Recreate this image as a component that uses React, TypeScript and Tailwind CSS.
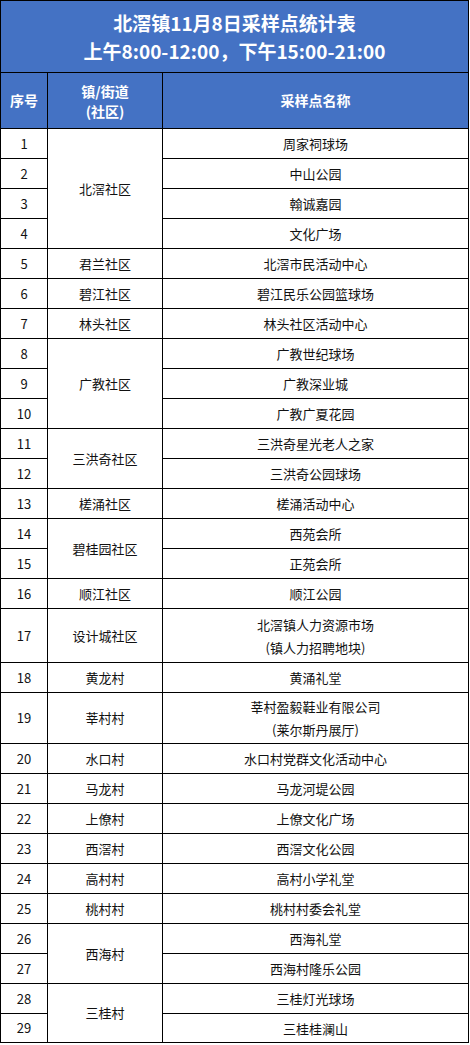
import React from 'react';

type Row = {
  no: number;
  area?: string;
  span?: number;
  sites: string[];
  h: number;
};

const rows: Row[] = [
  { no: 1, area: '北滘社区', span: 4, sites: ['周家祠球场'], h: 30 },
  { no: 2, sites: ['中山公园'], h: 30 },
  { no: 3, sites: ['翰诚嘉园'], h: 30 },
  { no: 4, sites: ['文化广场'], h: 30 },
  { no: 5, area: '君兰社区', sites: ['北滘市民活动中心'], h: 30 },
  { no: 6, area: '碧江社区', sites: ['碧江民乐公园篮球场'], h: 30 },
  { no: 7, area: '林头社区', sites: ['林头社区活动中心'], h: 30 },
  { no: 8, area: '广教社区', span: 3, sites: ['广教世纪球场'], h: 30 },
  { no: 9, sites: ['广教深业城'], h: 30 },
  { no: 10, sites: ['广教广夏花园'], h: 30 },
  { no: 11, area: '三洪奇社区', span: 2, sites: ['三洪奇星光老人之家'], h: 30 },
  { no: 12, sites: ['三洪奇公园球场'], h: 30 },
  { no: 13, area: '槎涌社区', sites: ['槎涌活动中心'], h: 30 },
  { no: 14, area: '碧桂园社区', span: 2, sites: ['西苑会所'], h: 30 },
  { no: 15, sites: ['正苑会所'], h: 30 },
  { no: 16, area: '顺江社区', sites: ['顺江公园'], h: 30 },
  { no: 17, area: '设计城社区', sites: ['北滘镇人力资源市场', '(镇人力招聘地块)'], h: 54 },
  { no: 18, area: '黄龙村', sites: ['黄涌礼堂'], h: 30 },
  { no: 19, area: '莘村村', sites: ['莘村盈毅鞋业有限公司', '(莱尔斯丹展厅)'], h: 51 },
  { no: 20, area: '水口村', sites: ['水口村党群文化活动中心'], h: 30 },
  { no: 21, area: '马龙村', sites: ['马龙河堤公园'], h: 30 },
  { no: 22, area: '上僚村', sites: ['上僚文化广场'], h: 30 },
  { no: 23, area: '西滘村', sites: ['西滘文化公园'], h: 30 },
  { no: 24, area: '高村村', sites: ['高村小学礼堂'], h: 30 },
  { no: 25, area: '桃村村', sites: ['桃村村委会礼堂'], h: 30 },
  { no: 26, area: '西海村', span: 2, sites: ['西海礼堂'], h: 30 },
  { no: 27, sites: ['西海村隆乐公园'], h: 30 },
  { no: 28, area: '三桂村', span: 2, sites: ['三桂灯光球场'], h: 30 },
  { no: 29, sites: ['三桂桂澜山'], h: 29 },
];

const cell = 'border border-black text-center align-middle p-0';

const App = () => {
  return (
    <div className="bg-white w-[470px] min-h-[1045px] font-['Noto_Sans_CJK_SC',sans-serif] text-[#111]">
      <table className="table-fixed border-collapse w-[468px]">
        <colgroup>
          <col className="w-[47px]" />
          <col className="w-[115px]" />
          <col className="w-[306px]" />
        </colgroup>
        <thead>
          <tr className="h-[72px] bg-[#4472c4]">
            <th
              colSpan={3}
              className={`${cell} text-white text-[19px] font-bold leading-[28px]`}
            >
              <div>北滘镇11月8日采样点统计表</div>
              <div>上午8:00-12:00，下午15:00-21:00</div>
            </th>
          </tr>
          <tr className="h-[56px] bg-[#4472c4] text-white text-[14px] font-bold">
            <th className={cell}>序号</th>
            <th className={`${cell} leading-[20px]`}>
              <div>镇/街道</div>
              <div>(社区)</div>
            </th>
            <th className={cell}>采样点名称</th>
          </tr>
        </thead>
        <tbody className="text-[13px]">
          {rows.map((r) => (
            <tr key={r.no} style={{ height: r.h }}>
              <td className={cell}>{r.no}</td>
              {r.area && (
                <td className={cell} rowSpan={r.span ?? 1}>
                  {r.area}
                </td>
              )}
              <td className={`${cell} leading-[23px]`}>
                {r.sites.map((s) => (
                  <div key={s}>{s}</div>
                ))}
              </td>
            </tr>
          ))}
        </tbody>
      </table>
    </div>
  );
};

export default App;
